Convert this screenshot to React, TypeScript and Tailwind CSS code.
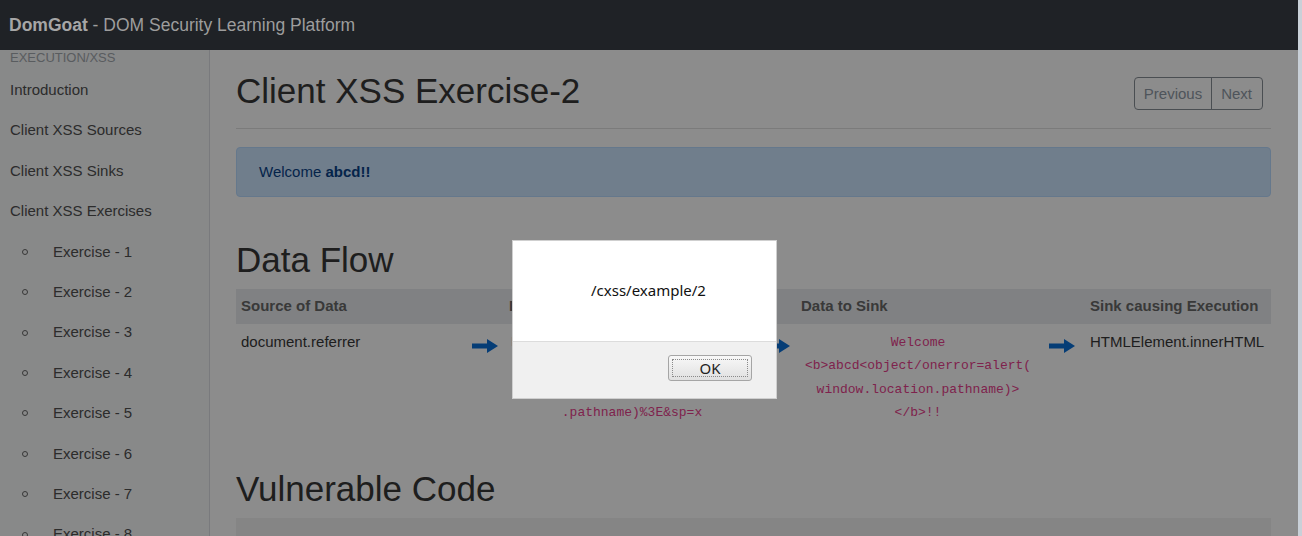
import React from "react";

const sideLinks = ["Introduction", "Client XSS Sources", "Client XSS Sinks", "Client XSS Exercises"];
const exercises = [1, 2, 3, 4, 5, 6, 7, 8];

function Arrow() {
  return (
    <svg width="26" height="14" viewBox="0 0 26 14" className="block">
      <rect x="0" y="4.5" width="17" height="5" fill="#0a6fd8" />
      <polygon points="15,0 26,7 15,14" fill="#0a6fd8" />
    </svg>
  );
}

function Sidebar() {
  return (
    <aside className="w-[210px] shrink-0 border-r border-[#dcdfe3] bg-[#f8f9fa] overflow-hidden">
      <div className="-mt-[2px]">
        <div className="pl-[10px] text-[13px] leading-[20px] uppercase text-[#a3a8ad]">Execution/XSS</div>
        <ul className="mt-[2px]">
          {sideLinks.map((l) => (
            <li key={l} className="pl-[10px] py-[9px] leading-[22.4px] text-[15px] text-[#505050]">
              {l}
            </li>
          ))}
          {exercises.map((n) => (
            <li key={n} className="flex items-center py-[9px] leading-[22.4px] text-[15px] text-[#505050]">
              <span className="ml-[22px] mr-[25px] h-[6px] w-[6px] rounded-full border border-[#666]" />
              Exercise - {n}
            </li>
          ))}
        </ul>
      </div>
    </aside>
  );
}

function DataFlow() {
  const code = "font-['Liberation_Mono',monospace] text-[13px] leading-[23.3px] text-[#e83e8c] text-center";
  return (
    <div className="mt-[8px]">
      <div className="grid grid-cols-[230px_38px_256px_33px_250px_42px_1fr] h-[35px] items-center bg-[#e9ecef] text-[15px] font-bold text-[#686868]">
        <div className="pl-[5px]">Source of Data</div>
        <div />
        <div className="pl-[5px] whitespace-nowrap">Data in Location</div>
        <div />
        <div className="pl-[8px]">Data to Sink</div>
        <div />
        <div className="pl-[5px]">Sink causing Execution</div>
      </div>
      <div className="grid grid-cols-[230px_38px_256px_33px_250px_42px_1fr] pt-[7px] pb-[8px] text-[15px] text-[#383838]">
        <div className="pl-[5px] leading-[22.5px]">document.referrer</div>
        <div className="flex justify-center pt-[8px]"><Arrow /></div>
        <div className={code}>
          <div>http://localhost/cxss/example/2</div>
          <div>?name=abcd%3Cobject/onerror=</div>
          <div>alert(window.location</div>
          <div>.pathname)%3E&amp;sp=x</div>
        </div>
        <div className="flex justify-start pt-[8px] pl-[4px]"><Arrow /></div>
        <div className={code}>
          <div>Welcome</div>
          <div>&lt;b&gt;abcd&lt;object/onerror=alert(</div>
          <div>window.location.pathname)&gt;</div>
          <div>&lt;/b&gt;!!</div>
        </div>
        <div className="flex justify-start pl-[6px] pt-[8px]"><Arrow /></div>
        <div className="pl-[5px] leading-[22.5px] whitespace-nowrap">HTMLElement.innerHTML</div>
      </div>
    </div>
  );
}

function Main() {
  return (
    <main className="flex-1 pl-[26px] pr-[27px] pt-[20px] bg-white overflow-hidden">
      <div className="flex justify-between items-start">
        <h1 className="text-[35px] leading-[42px] text-[#383838]">Client XSS Exercise-2</h1>
        <div className="mt-[7px] mr-[8px] flex rounded-[4px] border border-[#888f96] text-[15px] text-[#8f9aa6]">
          <div className="pl-[9px] pr-[9px] h-[31px] leading-[31px]">Previous</div>
          <div className="pl-[9px] pr-[10px] h-[31px] leading-[31px] border-l border-[#888f96]">Next</div>
        </div>
      </div>
      <div className="mt-[16px] h-px bg-[#e0e0e0]" />
      <div className="mt-[18px] rounded-[4px] border border-[#b8daff] bg-[#cce5ff] px-[22px] py-[13px] text-[15px] leading-[22px] text-[#084288]">
        Welcome <b>abcd!!</b>
      </div>
      <h2 className="mt-[42px] text-[35px] leading-[42px] text-[#383838]">Data Flow</h2>
      <DataFlow />
      <h2 className="mt-[36px] text-[35px] leading-[42px] text-[#383838]">Vulnerable Code</h2>
      <div className="mt-[8px] h-[60px] bg-[#f2f2f2]" />
    </main>
  );
}

function AlertDialog() {
  return (
    <div className="absolute left-[512px] top-[240px] w-[265px] border border-[#cfcfcf] bg-white font-['Noto_Sans',sans-serif] text-[15px] text-[#111]">
      <div className="h-[100px] flex items-center justify-center pl-[8px] pb-[2px]">/cxss/example/2</div>
      <div className="h-[57px] border-t border-[#dcdcdc] bg-[#f0f0f0] flex justify-end items-start pt-[13px] pr-[24px]">
        <div className="h-[26px] w-[84px] rounded-[3px] border border-[#a5a5a5] bg-gradient-to-b from-[#f8f8f8] to-[#e0e0e0] p-[3px]">
          <div className="h-full w-full border border-dotted border-[#8a8a8a] flex items-center justify-center leading-none text-[#222]">
            OK
          </div>
        </div>
      </div>
    </div>
  );
}

export default function App() {
  return (
    <div className="flex h-[536px] w-[1302px] overflow-hidden font-['Liberation_Sans',Arial,sans-serif]">
      <div className="relative flex-1 flex flex-col">
        <header className="h-[50px] shrink-0 bg-[#1f2226] pl-[9px] flex items-center text-[17.5px] text-[#9d9d9d]">
          <span className="font-bold text-[#a6a6a6]">DomGoat</span>
          <span>&nbsp;- DOM Security Learning Platform</span>
        </header>
        <div className="flex flex-1 overflow-hidden">
          <Sidebar />
          <Main />
        </div>
        <div className="absolute left-0 right-0 top-[50px] bottom-0 bg-black/45" />
        <AlertDialog />
      </div>
      <div className="w-[4px] shrink-0 bg-[#c9d0d8]" />
    </div>
  );
}
